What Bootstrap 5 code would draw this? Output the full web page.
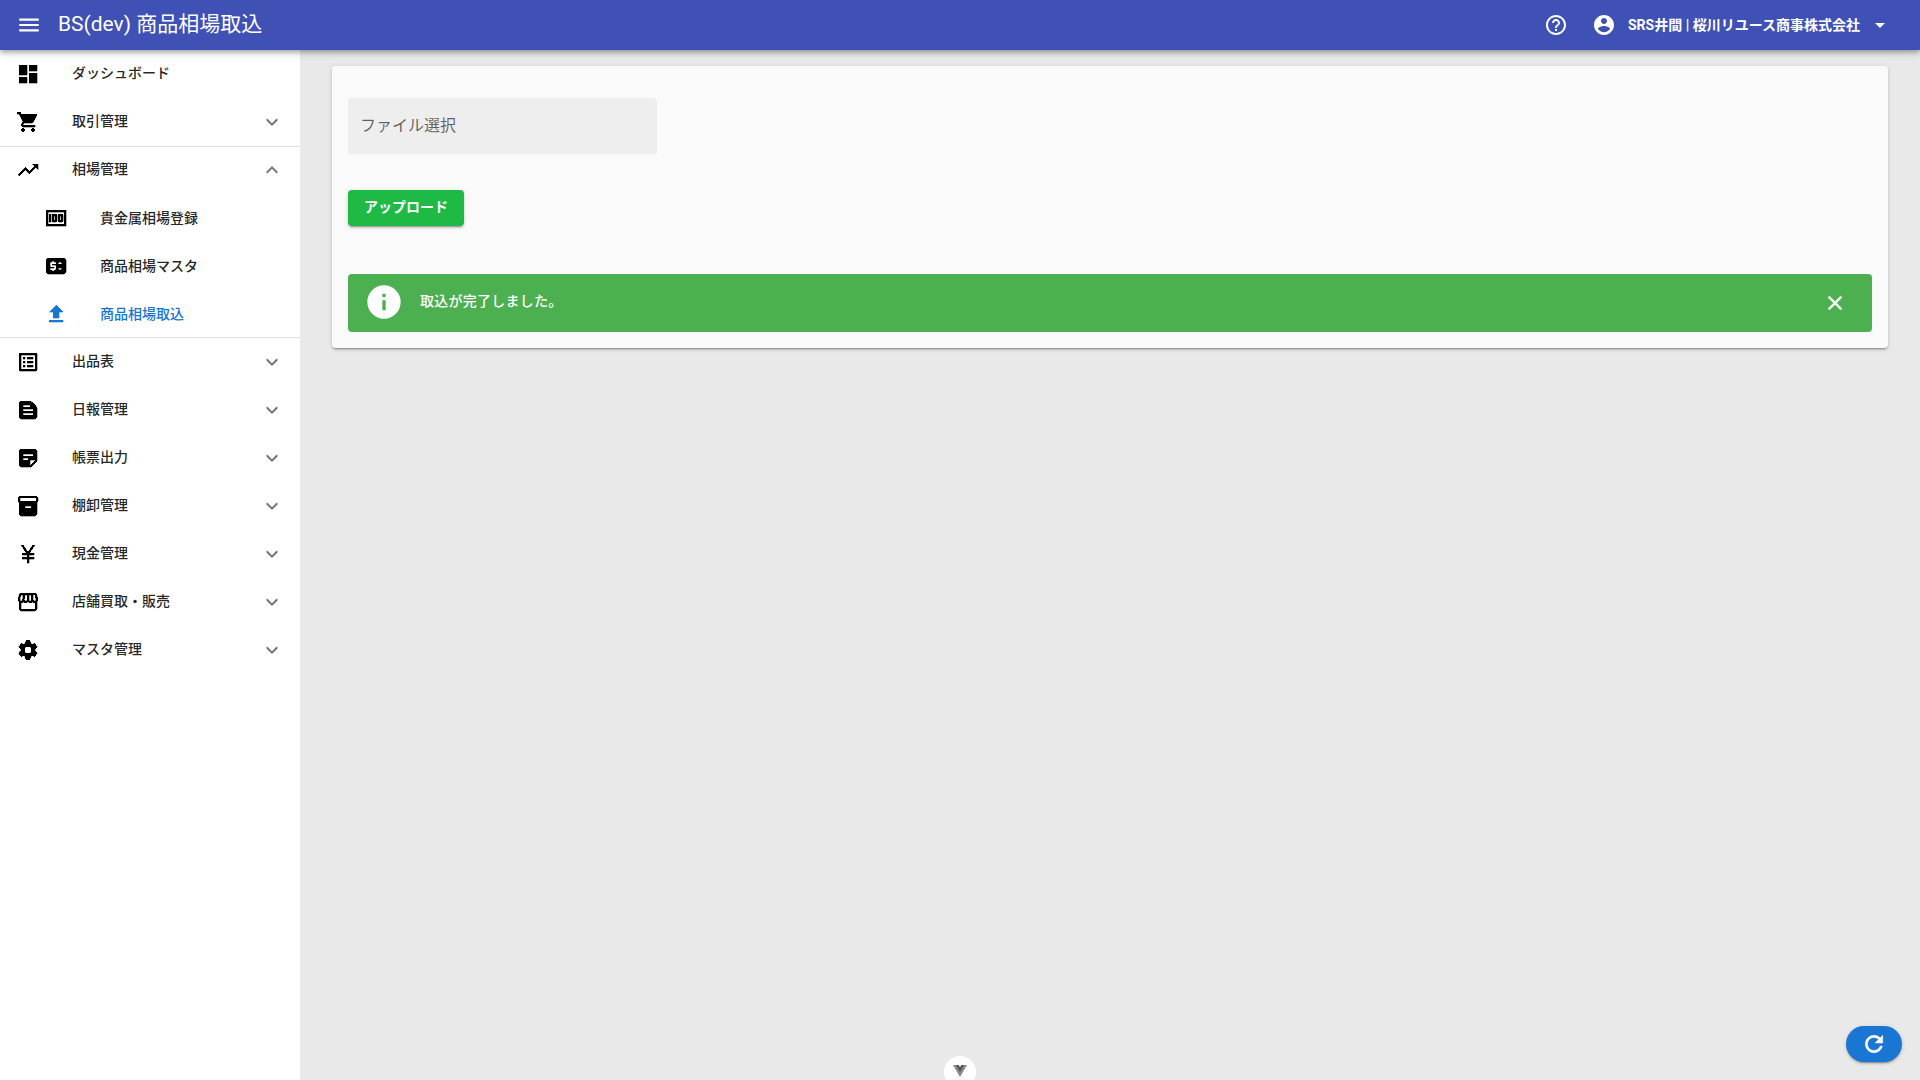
<!DOCTYPE html>
<html lang="ja">
<head>
    <meta charset="UTF-8">
    <title>BS(dev) 商品相場取込</title>
    <link href="https://cdn.jsdelivr.net/npm/bootstrap@5.3.0/dist/css/bootstrap.min.css" rel="stylesheet">
    <style>
        html, body {
            height: 100%;
            overflow: hidden;
        }
        body {
            font-family: Roboto, "Noto Sans CJK JP", sans-serif;
            background: #e9e9e9;
            color: rgba(0, 0, 0, .87);
        }
        svg {
            fill: currentColor;
            flex: none;
        }
        .app-bar {
            height: 50px;
            background: #3f51b5;
            color: #fff;
            padding: 0 28px 0 16px;
            box-shadow: 0 2px 4px -1px rgba(0,0,0,.2), 0 4px 5px rgba(0,0,0,.14), 0 1px 10px rgba(0,0,0,.12);
            position: relative;
            z-index: 5;
        }
        .app-title {
            font-size: 21px;
            font-weight: 400;
            margin-left: 16px;
        }
        .app-user {
            font-size: 14px;
            font-weight: 700;
            margin-left: 12px;
        }
        .page-body {
            height: 1030px;
        }
        .side-menu {
            width: 300px;
            background: #fff;
            flex: none;
        }
        .menu-row {
            height: 48px;
            padding: 0 16px;
            font-size: 14px;
            font-weight: 500;
            color: rgba(0, 0, 0, .87);
        }
        .menu-row .row-icon {
            color: #000;
            stroke: currentColor;
            stroke-width: .3;
            shape-rendering: crispEdges;
        }
        .menu-row .row-label {
            margin-left: 32px;
            flex: 1;
            margin-top: -2px;
        }
        .menu-row .row-chevron {
            color: rgba(0, 0, 0, .54);
        }
        .menu-sub {
            padding-left: 44px;
        }
        .menu-sub .row-label {
            margin-top: 0;
        }
        .menu-row.menu-active, .menu-row.menu-active .row-icon {
            color: #1976d2;
        }
        .menu-open {
            box-shadow: inset 0 1px 0 #e0e0e0, inset 0 -1px 0 #e0e0e0;
        }
        .main-pane {
            padding: 16px 32px;
        }
        .upload-card {
            background: #fafafa;
            border-radius: 4px;
            padding: 32px 16px 16px;
            box-shadow: 0 3px 1px -2px rgba(0,0,0,.2), 0 2px 2px rgba(0,0,0,.14), 0 1px 5px rgba(0,0,0,.12);
        }
        .file-field {
            width: 309px;
            height: 56px;
            background: #eee;
            border-radius: 4px 4px 0 0;
            padding: 0 12px 1px;
            font-size: 16px;
            color: rgba(0, 0, 0, .6);
        }
        .upload-btn {
            display: block;
            width: 116px;
            height: 36px;
            margin-top: 36px;
            padding: 0 0 2px;
            background: #1fba45;
            color: #fff;
            border: 0;
            border-radius: 4px;
            font-size: 14px;
            font-weight: 700;
            box-shadow: 0 3px 1px -2px rgba(0,0,0,.2), 0 2px 2px rgba(0,0,0,.14), 0 1px 5px rgba(0,0,0,.12);
        }
        .done-alert {
            height: 58px;
            margin-top: 48px;
            padding: 0 25px 0 16px;
            background: #4caf50;
            color: #fff;
            border-radius: 4px;
            font-size: 14px;
            font-weight: 500;
        }
        .done-alert .alert-icon {
            margin-top: -2px;
        }
        .done-alert .alert-text {
            margin-left: 16px;
            margin-top: -3px;
            letter-spacing: .25px;
            flex: 1;
        }
        .done-alert .alert-close {
            stroke: #fff;
            stroke-width: .4;
        }
        .reload-btn {
            position: fixed;
            right: 18px;
            bottom: 18px;
            width: 56px;
            height: 36px;
            border-radius: 18px;
            background: #1976d2;
            color: #fff;
            box-shadow: 0 3px 1px -2px rgba(0,0,0,.2), 0 2px 2px rgba(0,0,0,.14), 0 1px 5px rgba(0,0,0,.12);
        }
        .reload-btn svg {
            stroke: #fff;
            stroke-width: .5;
        }
        .devtools-tab {
            position: fixed;
            left: 944px;
            bottom: -8px;
            width: 32px;
            height: 32px;
            border-radius: 50%;
            background: #fff;
        }
        .devtools-tab svg {
            margin-top: 9px;
        }
    </style>
</head>
<body>
    <header class="app-bar d-flex align-items-center">
        <svg width="26" height="26" viewBox="0 0 24 24"><path d="M3 18h18v-2H3v2zm0-5h18v-2H3v2zm0-7v2h18V6H3z"/></svg>
        <div class="app-title">BS(dev) 商品相場取込</div>
        <div class="ms-auto d-flex align-items-center">
            <svg width="24" height="24" viewBox="0 0 24 24"><path d="M11 18h2v-2h-2v2zm1-16C6.48 2 2 6.48 2 12s4.48 10 10 10 10-4.48 10-10S17.52 2 12 2zm0 18c-4.41 0-8-3.59-8-8s3.59-8 8-8 8 3.59 8 8-3.59 8-8 8zm0-14c-2.21 0-4 1.79-4 4h2c0-1.1.9-2 2-2s2 .9 2 2c0 2-3 1.75-3 5h2c0-2.25 3-2.5 3-5 0-2.21-1.79-4-4-4z"/></svg>
            <svg class="ms-4" width="24" height="24" viewBox="0 0 24 24"><path d="M12 2C6.48 2 2 6.48 2 12s4.48 10 10 10 10-4.48 10-10S17.52 2 12 2zm0 3c1.66 0 3 1.34 3 3s-1.34 3-3 3-3-1.34-3-3 1.34-3 3-3zm0 14.2c-2.5 0-4.71-1.28-6-3.22.03-1.99 4-3.08 6-3.08 1.99 0 5.97 1.09 6 3.08-1.29 1.94-3.5 3.22-6 3.22z"/></svg>
            <span class="app-user">SRS井間 | 桜川リユース商事株式会社</span>
            <svg class="ms-2" width="24" height="24" viewBox="0 0 24 24"><path d="M7 10l5 5 5-5z"/></svg>
        </div>
    </header>

    <div class="page-body d-flex">
        <nav class="side-menu">
            <div class="menu-row d-flex align-items-center">
                <svg class="row-icon" width="24" height="24" viewBox="0 0 24 24"><path d="M3 13h8V3H3v10zm0 8h8v-6H3v6zm10 0h8V11h-8v10zm0-18v6h8V3h-8z"/></svg>
                <span class="row-label">ダッシュボード</span>
            </div>
            <div class="menu-row d-flex align-items-center">
                <svg class="row-icon" width="24" height="24" viewBox="0 0 24 24"><path d="M7 18c-1.1 0-1.99.9-1.99 2S5.9 22 7 22s2-.9 2-2-.9-2-2-2zM1 2v2h2l3.6 7.59-1.35 2.45c-.16.28-.25.61-.25.96 0 1.1.9 2 2 2h12v-2H7.42c-.14 0-.25-.11-.25-.25l.03-.12.9-1.63h7.45c.75 0 1.41-.41 1.75-1.03l3.58-6.49c.08-.14.12-.31.12-.48 0-.55-.45-1-1-1H5.21l-.94-2H1zm16 16c-1.1 0-1.99.9-1.99 2s.89 2 1.99 2 2-.9 2-2-.9-2-2-2z"/></svg>
                <span class="row-label">取引管理</span>
                <svg class="row-chevron" width="24" height="24" viewBox="0 0 24 24"><path d="M7.41 8.59L12 13.17l4.59-4.58L18 10l-6 6-6-6z"/></svg>
            </div>
            <div class="menu-open">
                <div class="menu-row d-flex align-items-center">
                    <svg class="row-icon" width="24" height="24" viewBox="0 0 24 24"><path d="M16 6l2.29 2.29-4.88 4.88-4-4L2 16.59 3.41 18l6-6 4 4 6.3-6.29L22 12V6z"/></svg>
                    <span class="row-label">相場管理</span>
                    <svg class="row-chevron" width="24" height="24" viewBox="0 0 24 24"><path d="M7.41 15.41L12 10.83l4.59 4.58L18 14l-6-6-6 6z"/></svg>
                </div>
                <div class="menu-row menu-sub d-flex align-items-center">
                    <svg class="row-icon" width="24" height="24" viewBox="0 0 24 24"><path d="M5 8h2v8H5zm7 0H9c-.55 0-1 .45-1 1v6c0 .55.45 1 1 1h3c.55 0 1-.45 1-1V9c0-.55-.45-1-1-1zm-1 6h-1v-4h1v4zm7-6h-3c-.55 0-1 .45-1 1v6c0 .55.45 1 1 1h3c.55 0 1-.45 1-1V9c0-.55-.45-1-1-1zm-1 6h-1v-4h1v4z"/><path d="M2 4v16h20V4H2zm18 14H4V6h16v12z"/></svg>
                    <span class="row-label">貴金属相場登録</span>
                </div>
                <div class="menu-row menu-sub d-flex align-items-center">
                    <svg class="row-icon" width="24" height="24" viewBox="0 0 24 24"><path d="M20 4H4c-1.11 0-1.99.89-1.99 2L2 18c0 1.11.89 2 2 2h16c1.11 0 2-.89 2-2V6c0-1.11-.89-2-2-2zm-8 6H8v1h3c.55 0 1 .45 1 1v3c0 .55-.45 1-1 1h-1v1H8v-1H6v-2h4v-1H7c-.55 0-1-.45-1-1V9c0-.55.45-1 1-1h1V7h2v1h2v2zm4 6.25l-2-2h4l-2 2zM14 10l2-2.25L18 10h-4z"/></svg>
                    <span class="row-label">商品相場マスタ</span>
                </div>
                <div class="menu-row menu-sub menu-active d-flex align-items-center">
                    <svg class="row-icon" width="24" height="24" viewBox="0 0 24 24"><path d="M9 16h6v-6h4l-7-7-7 7h4zm-4 2h14v2H5z"/></svg>
                    <span class="row-label">商品相場取込</span>
                </div>
            </div>
            <div class="menu-row d-flex align-items-center">
                <svg class="row-icon" width="24" height="24" viewBox="0 0 24 24"><path d="M19 5v14H5V5h14m1.1-2H3.9c-.5 0-.9.4-.9.9v16.2c0 .4.4.9.9.9h16.2c.4 0 .9-.5.9-.9V3.9c0-.5-.5-.9-.9-.9zM11 7h6v2h-6V7zm0 4h6v2h-6v-2zm0 4h6v2h-6zM7 7h2v2H7zm0 4h2v2H7zm0 4h2v2H7z"/></svg>
                <span class="row-label">出品表</span>
                <svg class="row-chevron" width="24" height="24" viewBox="0 0 24 24"><path d="M7.41 8.59L12 13.17l4.59-4.58L18 10l-6 6-6-6z"/></svg>
            </div>
            <div class="menu-row d-flex align-items-center">
                <svg class="row-icon" width="24" height="24" viewBox="0 0 24 24"><path d="M20.41 8.41l-4.83-4.83C15.21 3.21 14.7 3 14.17 3H5c-1.1 0-2 .9-2 2v14c0 1.1.9 2 2 2h14c1.1 0 2-.9 2-2V9.83c0-.53-.21-1.04-.59-1.42zM7 7h7v2H7V7zm10 10H7v-2h10v2zm0-4H7v-2h10v2z"/></svg>
                <span class="row-label">日報管理</span>
                <svg class="row-chevron" width="24" height="24" viewBox="0 0 24 24"><path d="M7.41 8.59L12 13.17l4.59-4.58L18 10l-6 6-6-6z"/></svg>
            </div>
            <div class="menu-row d-flex align-items-center">
                <svg class="row-icon" width="24" height="24" viewBox="0 0 24 24"><path d="M19 3H4.99C3.89 3 3 3.9 3 5l.01 14c0 1.1.89 2 1.99 2h10l6-6V5c0-1.1-.9-2-2-2zM7 8h10v2H7V8zm5 6H7v-2h5v2zm2 5.5V14h5.5L14 19.5z"/></svg>
                <span class="row-label">帳票出力</span>
                <svg class="row-chevron" width="24" height="24" viewBox="0 0 24 24"><path d="M7.41 8.59L12 13.17l4.59-4.58L18 10l-6 6-6-6z"/></svg>
            </div>
            <div class="menu-row d-flex align-items-center">
                <svg class="row-icon" width="24" height="24" viewBox="0 0 24 24"><path d="M20 2H4c-1 0-2 .9-2 2v3.01c0 .72.43 1.34 1 1.69V20c0 1.1 1.1 2 2 2h14c.9 0 2-.9 2-2V8.7c.57-.35 1-.97 1-1.69V4c0-1.1-1-2-2-2zm-5 12H9v-2h6v2zm5-7H4V4l16-.02V7z"/></svg>
                <span class="row-label">棚卸管理</span>
                <svg class="row-chevron" width="24" height="24" viewBox="0 0 24 24"><path d="M7.41 8.59L12 13.17l4.59-4.58L18 10l-6 6-6-6z"/></svg>
            </div>
            <div class="menu-row d-flex align-items-center">
                <svg class="row-icon" width="24" height="24" viewBox="0 0 24 24"><path d="M13.92 11H18v2h-5v2h5v2h-5v4h-2v-4H6v-2h5v-2H6v-2h4.08L5 3h2.42L12 10.26 16.58 3H19l-5.08 8z"/></svg>
                <span class="row-label">現金管理</span>
                <svg class="row-chevron" width="24" height="24" viewBox="0 0 24 24"><path d="M7.41 8.59L12 13.17l4.59-4.58L18 10l-6 6-6-6z"/></svg>
            </div>
            <div class="menu-row d-flex align-items-center">
                <svg class="row-icon" width="24" height="24" viewBox="0 0 24 24"><path d="M21.9 8.89l-1.05-4.37c-.22-.9-1-1.52-1.91-1.52H5.05c-.9 0-1.69.63-1.9 1.52L2.1 8.89c-.24 1.02-.02 2.06.62 2.88.08.11.19.19.28.29V19c0 1.1.9 2 2 2h14c1.1 0 2-.9 2-2v-6.94c.09-.09.2-.18.28-.28.64-.82.87-1.87.62-2.89zm-2.99-3.9l1.05 4.37c.1.42.01.84-.25 1.17-.14.18-.44.47-.94.47-.61 0-1.14-.49-1.21-1.14L16.98 5l1.93-.01zM13 5h1.96l.54 4.52c.05.39-.07.78-.33 1.07-.22.26-.54.41-.95.41-.67 0-1.22-.59-1.22-1.31V5zM8.49 9.52L9.04 5H11v4.69c0 .72-.55 1.31-1.29 1.31-.34 0-.65-.15-.89-.41-.25-.29-.37-.68-.33-1.07zm-4.45-.16L5.05 5h1.97l-.58 4.86c-.08.65-.6 1.14-1.21 1.14-.49 0-.8-.29-.93-.47-.27-.32-.36-.75-.26-1.17zM5 19v-6.03c.08.01.15.03.23.03.87 0 1.66-.36 2.24-.95.6.6 1.4.95 2.31.95.87 0 1.65-.36 2.23-.93.59.57 1.39.93 2.29.93.84 0 1.64-.35 2.24-.95.58.59 1.37.95 2.24.95.08 0 .15-.02.23-.03V19H5z"/></svg>
                <span class="row-label">店舗買取・販売</span>
                <svg class="row-chevron" width="24" height="24" viewBox="0 0 24 24"><path d="M7.41 8.59L12 13.17l4.59-4.58L18 10l-6 6-6-6z"/></svg>
            </div>
            <div class="menu-row d-flex align-items-center">
                <svg class="row-icon" width="24" height="24" viewBox="0 0 24 24"><path d="M19.14 12.94c.04-.3.06-.61.06-.94 0-.32-.02-.64-.07-.94l2.03-1.58c.18-.14.23-.41.12-.61l-1.92-3.32c-.12-.22-.37-.29-.59-.22l-2.39.96c-.5-.38-1.03-.7-1.62-.94l-.36-2.54c-.04-.24-.24-.41-.48-.41h-3.84c-.24 0-.43.17-.47.41l-.36 2.54c-.59.24-1.13.57-1.62.94l-2.39-.96c-.22-.08-.47 0-.59.22L2.74 8.87c-.12.21-.08.47.12.61l2.03 1.58c-.05.3-.09.63-.09.94s.02.64.07.94l-2.03 1.58c-.18.14-.23.41-.12.61l1.92 3.32c.12.22.37.29.59.22l2.39-.96c.5.38 1.03.7 1.62.94l.36 2.54c.05.24.24.41.48.41h3.84c.24 0 .44-.17.47-.41l.36-2.54c.59-.24 1.13-.56 1.62-.94l2.39.96c.22.08.47 0 .59-.22l1.92-3.32c.12-.22.07-.47-.12-.61l-2.01-1.58zM12 15.6c-1.98 0-3.6-1.62-3.6-3.6s1.62-3.6 3.6-3.6 3.6 1.62 3.6 3.6-1.62 3.6-3.6 3.6z"/></svg>
                <span class="row-label">マスタ管理</span>
                <svg class="row-chevron" width="24" height="24" viewBox="0 0 24 24"><path d="M7.41 8.59L12 13.17l4.59-4.58L18 10l-6 6-6-6z"/></svg>
            </div>
        </nav>

        <main class="main-pane flex-grow-1">
            <div class="upload-card">
                <div class="file-field d-flex align-items-center">ファイル選択</div>
                <button class="btn upload-btn" type="button">アップロード</button>
                <div class="done-alert d-flex align-items-center">
                    <svg class="alert-icon" width="40" height="40" viewBox="0 0 24 24"><path d="M13,9H11V7H13M13,17H11V11H13M12,2A10,10 0 0,0 2,12A10,10 0 0,0 12,22A10,10 0 0,0 22,12A10,10 0 0,0 12,2Z"/></svg>
                    <span class="alert-text">取込が完了しました。</span>
                    <svg class="alert-close" width="24" height="24" viewBox="0 0 24 24"><path d="M19 6.41L17.59 5 12 10.59 6.41 5 5 6.41 10.59 12 5 17.59 6.41 19 12 13.41 17.59 19 19 17.59 13.41 12z"/></svg>
                </div>
            </div>
        </main>
    </div>

    <div class="reload-btn d-flex align-items-center justify-content-center">
        <svg width="26" height="26" viewBox="0 0 24 24"><path d="M17.65 6.35C16.2 4.9 14.21 4 12 4c-4.42 0-7.99 3.58-7.99 8s3.57 8 7.99 8c3.73 0 6.84-2.55 7.73-6h-2.08c-.82 2.33-3.04 4-5.65 4-3.31 0-6-2.69-6-6s2.69-6 6-6c1.66 0 3.14.69 4.22 1.78L13 11h7V4l-2.35 2.35z"/></svg>
    </div>
    <div class="devtools-tab d-flex justify-content-center">
        <svg width="14" height="12" viewBox="0 0 14 12"><path fill="#8a8a8a" d="M0 0h5.5L7 2.5 8.5 0H14L7 12z"/><path fill="#555" d="M3 0h2.5L7 2.5 8.5 0H11L7 7z"/></svg>
    </div>

    <script src="https://cdn.jsdelivr.net/npm/bootstrap@5.3.0/dist/js/bootstrap.bundle.min.js"></script>
</body>
</html>
